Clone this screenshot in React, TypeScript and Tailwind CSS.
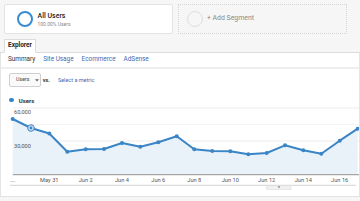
import React from 'react'

const PTS: [number, number][] = [
  [12.7, 122], [31, 131], [49.3, 136.5], [67.3, 154.7], [85.7, 152.3],
  [104, 152], [122, 146], [140.3, 149.7], [158.3, 145.3], [176.7, 139.3],
  [194.3, 152.3], [212.3, 154], [230.3, 154.3], [248.3, 157.3], [266.7, 156],
  [285, 148.3], [303.3, 153.3], [321.3, 156.7], [339.7, 143.7], [357.7, 131.7],
]

const X_LABELS = ['May 31', 'Jun 2', 'Jun 4', 'Jun 6', 'Jun 8', 'Jun 10', 'Jun 12', 'Jun 14', 'Jun 16']

function UsersChart() {
  const line = PTS.map(([x, y]) => `${x},${y}`).join(' ')
  const area = `12.7,177 ${line} 357.7,177`

  return (
    <svg width="358" height="92" className="block">
      {/* page coordinates */}
      <g transform="translate(-1,-107)" fontFamily="Roboto, 'Liberation Sans', sans-serif">
        <line x1="12.7" x2="359" y1="111" y2="111" stroke="#ececec" />
        <line x1="12.7" x2="359" y1="127.5" y2="127.5" stroke="#f4f4f4" />
        <line x1="12.7" x2="359" y1="144" y2="144" stroke="#ececec" />
        <line x1="12.7" x2="359" y1="160.5" y2="160.5" stroke="#f4f4f4" />

        <polygon points={area} fill="#e9f1f9" />

        <text x="14" y="117.2" fontSize="5.6" fill="#555">60,000</text>
        <text x="14" y="150.6" fontSize="5.6" fill="#555">30,000</text>

        <line x1="12.7" x2="359" y1="177.6" y2="177.6" stroke="#a6a6a6" strokeWidth="1.4" />

        <polyline points={line} fill="none" stroke="#3a85c6" strokeWidth="2" strokeLinejoin="round" />
        {PTS.map(([x, y], i) =>
          i === 1 ? null : <circle key={i} cx={x} cy={y} r="2" fill="#3a85c6" />
        )}
        {/* hovered point */}
        <circle cx={31} cy={131} r="3.3" fill="#d3e3f2" stroke="#3a85c6" strokeWidth="1" />
        <circle cx={31} cy={131} r="1.4" fill="#3a85c6" />

        {X_LABELS.map((label, i) => (
          <text
            key={label}
            x={PTS[2 + i * 2][0]}
            y="185.2"
            fontSize="5.7"
            fill="#555"
            textAnchor="middle"
          >
            {label}
          </text>
        ))}
        <line x1="10.3" x2="15.2" y1="184.6" y2="184.6" stroke="#cfcfcf" />

        {/* timeline scrubber */}
        <line x1="10" x2="356" y1="188.4" y2="188.4" stroke="#dcdcdc" strokeWidth="1.3" />
        <rect x="266.7" y="188.6" width="24.3" height="3.8" fill="#f1f1f1" stroke="#dadada" strokeWidth="0.6" />
        <path d="M277.6 189.4 L280.4 189.4 L279 190.9 Z" fill="#666" />
      </g>
    </svg>
  )
}

export default function App() {
  return (
    <div className="w-[360px] h-[201px] overflow-hidden bg-[#f6f6f6] font-['Roboto','Liberation_Sans',sans-serif]">
      {/* segments */}
      <div className="flex gap-[5px] pt-[4px] pl-[4px]">
        <div className="w-[169px] h-[30px] bg-white border border-[#e3e3e3] rounded-[2px] flex items-center pl-[12px] gap-[5px]">
          <div className="w-[15.5px] h-[15.5px] rounded-full border-[2.4px] border-[#3a8bd0]" />
          <div className="flex flex-col">
            <span className="text-[7px] leading-[8px] font-medium text-[#222]">All Users</span>
            <span className="text-[5px] leading-[6px] mt-[1px] text-[#888]">100.00% Users</span>
          </div>
        </div>
        <div className="w-[169px] h-[30px] border border-dotted border-[#d4d4d4] flex items-center pl-[8px] gap-[4.5px]">
          <div className="w-[15.5px] h-[15.5px] rounded-full border-[1.6px] border-[#dedede]" />
          <span className="text-[6.9px] leading-[8px] mb-[3px] text-[#8a8a8a]">+ Add Segment</span>
        </div>
      </div>

      {/* main tab */}
      <div className="flex mt-[5px] pl-[4px] border-b border-[#dcdcdc]">
        <div className="h-[14px] w-[32px] -mb-px flex items-center justify-center bg-white border border-[#dcdcdc] border-b-white">
          <span className="text-[6.4px] font-bold text-[#222]">Explorer</span>
        </div>
      </div>

      {/* panel */}
      <div className="bg-white border-x border-b border-[#e4e4e4]">
        <div className="h-[16px] flex items-center gap-[8px] pl-[7px] border-b-2 border-[#eeeeee] text-[6.4px]">
          <span className="text-[#333]">Summary</span>
          <span className="text-[#3b6cb4]">Site Usage</span>
          <span className="text-[#3b6cb4]">Ecommerce</span>
          <span className="text-[#3b6cb4]">AdSense</span>
        </div>

        <div className="flex items-center pt-[4px] pl-[8px]">
          <div className="h-[14px] w-[32px] flex items-center pl-[6px] gap-[5px] border border-[#cfcfcf] rounded-[2px] bg-[#fafafa]">
            <span className="text-[5.3px] text-[#444]">Users</span>
            <svg width="4" height="3" className="block">
              <path d="M0 0.3 L4 0.3 L2 2.6 Z" fill="#666" />
            </svg>
          </div>
          <span className="ml-[1.7px] text-[5.5px] font-bold text-[#333]">vs.</span>
          <span className="ml-[8px] text-[5.5px] text-[#3b6cb4]">Select a metric</span>
        </div>

        <div className="h-[8px] mt-[9px] flex items-center pl-[8.3px] gap-[5px]">
          <div className="w-[4.5px] h-[4.5px] rounded-full bg-[#3a85c6]" />
          <span className="text-[6px] font-bold text-[#333]">Users</span>
        </div>

        <UsersChart />
      </div>
    </div>
  )
}
